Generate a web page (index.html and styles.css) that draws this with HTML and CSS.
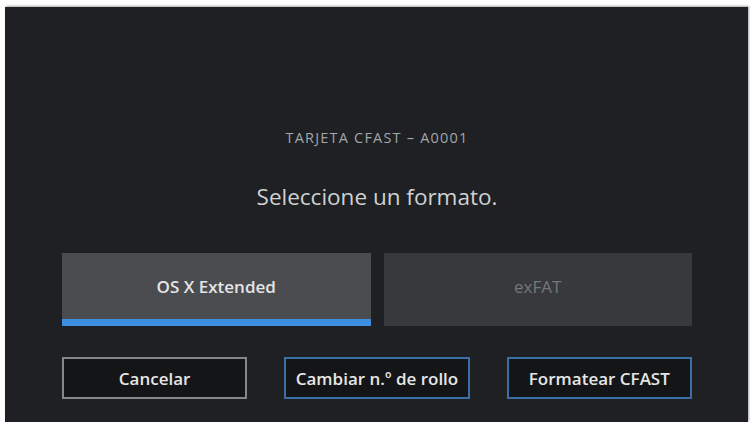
FILE: index.html
```html
<!DOCTYPE html>
<html lang="es">
<head>
    <meta charset="UTF-8">
    <meta name="viewport" content="width=device-width, initial-scale=1.0">
    <title>Formatear tarjeta</title>
    <link rel="stylesheet" href="styles.css">
</head>
<body>
    <div class="screen">
        <div class="card-name">TARJETA CFAST – A0001</div>
        <div class="prompt">Seleccione un formato.</div>
        <div class="formats">
            <div class="format selected">OS X Extended</div>
            <div class="format">exFAT</div>
        </div>
        <div class="actions">
            <button type="button" class="action">Cancelar</button>
            <button type="button" class="action primary">Cambiar n.º de rollo</button>
            <button type="button" class="action primary">Formatear CFAST</button>
        </div>
    </div>
</body>
</html>
```

FILE: styles.css
```css
body {
    margin: 0;
    padding: 0;
    background-color: #fff;
    font-family: "Open Sans", Lato, sans-serif;
}
.screen {
    box-sizing: border-box;
    width: 743px;
    height: 415px;
    margin: 7px 0 0 5px;
    padding: 122px 56px 0 57px;
    background-color: #1e2023;
    box-shadow: 1px -1px 2px rgba(0, 0, 0, 0.35);
    display: flex;
    flex-direction: column;
}
.card-name {
    text-align: center;
    font-size: 14.5px;
    line-height: 18px;
    color: #a3a5a8;
    letter-spacing: 1.2px;
}
.prompt {
    margin-top: 36px;
    text-align: center;
    font-size: 22.5px;
    line-height: 28px;
    color: #d0d1d2;
}
.formats {
    margin-top: 42px;
    display: flex;
    gap: 13px;
}
.format {
    flex: 1;
    height: 73px;
    box-sizing: border-box;
    display: flex;
    align-items: center;
    justify-content: center;
    padding-bottom: 6px;
    background-color: #37393d;
    color: #74777b;
    font-size: 17px;
}
.format.selected {
    background-color: #4a4c50;
    color: #e4e5e6;
    font-weight: 600;
    border-bottom: 7px solid #3d8de0;
    padding-bottom: 0;
}
.actions {
    margin-top: 31px;
    display: flex;
    gap: 37px;
}
.action {
    flex: 1;
    height: 42px;
    background-color: #141517;
    border: 2px solid #85878a;
    color: #e6e6e6;
    font-family: "Open Sans", Lato, sans-serif;
    font-size: 17px;
    font-weight: 600;
    padding: 0;
}
.action.primary {
    border-color: #3b6fa6;
}
```
